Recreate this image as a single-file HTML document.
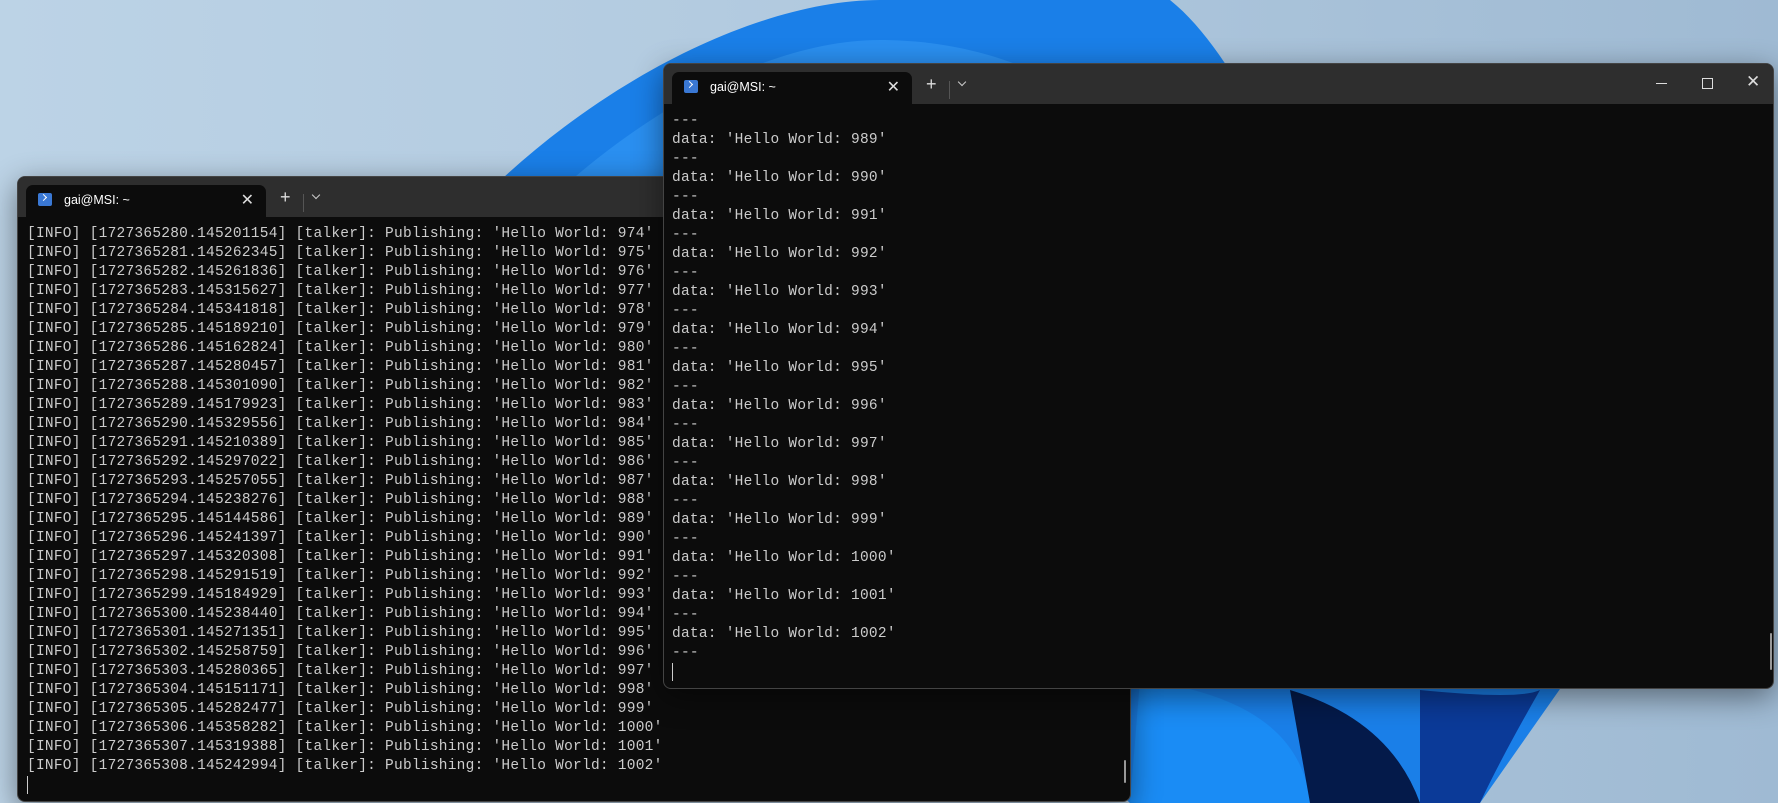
<!DOCTYPE html>
<html><head><meta charset="utf-8"><style>
*{margin:0;padding:0;box-sizing:border-box}
body{width:1778px;height:803px;overflow:hidden;position:relative;background:linear-gradient(90deg,#bcd3e6 0%,#b3cbe0 40%,#9fbad3 100%);font-family:"Liberation Sans",sans-serif}
.win{position:absolute;background:#0c0c0c;border-radius:8px;overflow:hidden;box-shadow:0 8px 30px rgba(0,0,0,.45);border:1px solid #444}
.bar{position:absolute;left:0;right:0;top:0;height:40px;background:#2e2e2e}
.tab{position:absolute;top:8px;height:32px;width:240px;background:#0c0c0c;border-radius:7px 7px 0 0;left:8px}
.tab .ic{position:absolute;left:12px;top:8px;width:14px;height:13px;background:#3a78d4;border-radius:2px}
.tab .ic:after{content:"";position:absolute;left:3px;top:2px;width:4px;height:4px;border-right:1.5px solid #fff;border-bottom:1.5px solid #fff;transform:rotate(-45deg)}
.tab .t{position:absolute;left:38px;top:8px;color:#fff;font-size:12.5px}
.tab .x{position:absolute;right:12px;top:5px;color:#ddd;font-size:16px}
.plus{position:absolute;top:10px;color:#ddd;font-size:18px}
.sep{position:absolute;top:17px;width:1px;height:18px;background:#555}
.chev{position:absolute;top:15px;width:6px;height:6px;border-right:1.3px solid #ccc;border-bottom:1.3px solid #ccc;transform:rotate(45deg)}
pre{position:absolute;font-family:"Liberation Mono",monospace;font-size:14.5px;line-height:19px;color:#cccccc;letter-spacing:0.25px}
.cur{display:inline-block;width:1px;height:18px;background:#ccc;vertical-align:middle}
.sb{position:absolute;width:2px;background:#999;border-radius:1px}
</style></head><body>
<svg width="1778" height="803" style="position:absolute;left:0;top:0">
<path d="M480,200 C600,80 760,0 880,0 L1170,0 C1220,40 1260,120 1300,200 L1560,689 L1480,803 L1130,803 Z" fill="#1a7fe8"/>
<path d="M560,190 C660,100 780,40 880,40 C1000,40 1100,90 1200,190 Z" fill="#3aa0f8" opacity=".5"/>
<path d="M700,190 C780,120 860,90 930,90 C1020,90 1090,130 1150,190 Z" fill="#1f8ef5" opacity=".7"/>
<path d="M1140,680 Q1300,700 1310,803 L1130,803 Z" fill="#1a8cf5"/>
<path d="M1290,690 Q1390,720 1420,803 L1310,803 Z" fill="#041a4a"/>
<path d="M1420,690 Q1520,700 1540,690 Q1500,760 1480,803 L1420,803 Z" fill="#0b3a98"/>
</svg>

<div class="win" style="left:17px;top:176px;width:1114px;height:626px">
 <div class="bar"></div>
 <div class="tab"><div class="ic"></div><div class="t">gai@MSI: ~</div><div class="x">✕</div></div>
 <div class="plus" style="left:262px">+</div><div class="sep" style="left:285px"></div><div class="chev" style="left:295px"></div>
 <pre style="left:9px;top:48px">[INFO] [1727365280.145201154] [talker]: Publishing: 'Hello World: 974'
[INFO] [1727365281.145262345] [talker]: Publishing: 'Hello World: 975'
[INFO] [1727365282.145261836] [talker]: Publishing: 'Hello World: 976'
[INFO] [1727365283.145315627] [talker]: Publishing: 'Hello World: 977'
[INFO] [1727365284.145341818] [talker]: Publishing: 'Hello World: 978'
[INFO] [1727365285.145189210] [talker]: Publishing: 'Hello World: 979'
[INFO] [1727365286.145162824] [talker]: Publishing: 'Hello World: 980'
[INFO] [1727365287.145280457] [talker]: Publishing: 'Hello World: 981'
[INFO] [1727365288.145301090] [talker]: Publishing: 'Hello World: 982'
[INFO] [1727365289.145179923] [talker]: Publishing: 'Hello World: 983'
[INFO] [1727365290.145329556] [talker]: Publishing: 'Hello World: 984'
[INFO] [1727365291.145210389] [talker]: Publishing: 'Hello World: 985'
[INFO] [1727365292.145297022] [talker]: Publishing: 'Hello World: 986'
[INFO] [1727365293.145257055] [talker]: Publishing: 'Hello World: 987'
[INFO] [1727365294.145238276] [talker]: Publishing: 'Hello World: 988'
[INFO] [1727365295.145144586] [talker]: Publishing: 'Hello World: 989'
[INFO] [1727365296.145241397] [talker]: Publishing: 'Hello World: 990'
[INFO] [1727365297.145320308] [talker]: Publishing: 'Hello World: 991'
[INFO] [1727365298.145291519] [talker]: Publishing: 'Hello World: 992'
[INFO] [1727365299.145184929] [talker]: Publishing: 'Hello World: 993'
[INFO] [1727365300.145238440] [talker]: Publishing: 'Hello World: 994'
[INFO] [1727365301.145271351] [talker]: Publishing: 'Hello World: 995'
[INFO] [1727365302.145258759] [talker]: Publishing: 'Hello World: 996'
[INFO] [1727365303.145280365] [talker]: Publishing: 'Hello World: 997'
[INFO] [1727365304.145151171] [talker]: Publishing: 'Hello World: 998'
[INFO] [1727365305.145282477] [talker]: Publishing: 'Hello World: 999'
[INFO] [1727365306.145358282] [talker]: Publishing: 'Hello World: 1000'
[INFO] [1727365307.145319388] [talker]: Publishing: 'Hello World: 1001'
[INFO] [1727365308.145242994] [talker]: Publishing: 'Hello World: 1002'
<span class="cur"></span></pre>
 <div class="sb" style="left:1106px;top:583px;height:23px"></div>
</div>

<div class="win" style="left:663px;top:63px;width:1111px;height:626px">
 <div class="bar"></div>
 <div class="tab"><div class="ic"></div><div class="t">gai@MSI: ~</div><div class="x">✕</div></div>
 <div class="plus" style="left:262px">+</div><div class="sep" style="left:285px"></div><div class="chev" style="left:295px"></div>
 <div style="position:absolute;left:992px;top:19px;width:11px;height:1px;background:#ddd"></div>
 <div style="position:absolute;left:1038px;top:14px;width:11px;height:11px;border:1px solid #ddd"></div>
 <div style="position:absolute;left:1082px;top:8px;color:#ddd;font-size:17px">✕</div>
 <pre style="left:8px;top:48px">---
data: 'Hello World: 989'
---
data: 'Hello World: 990'
---
data: 'Hello World: 991'
---
data: 'Hello World: 992'
---
data: 'Hello World: 993'
---
data: 'Hello World: 994'
---
data: 'Hello World: 995'
---
data: 'Hello World: 996'
---
data: 'Hello World: 997'
---
data: 'Hello World: 998'
---
data: 'Hello World: 999'
---
data: 'Hello World: 1000'
---
data: 'Hello World: 1001'
---
data: 'Hello World: 1002'
---
<span class="cur"></span></pre>
 <div class="sb" style="left:1106px;top:569px;height:37px"></div>
</div>
</body></html>
